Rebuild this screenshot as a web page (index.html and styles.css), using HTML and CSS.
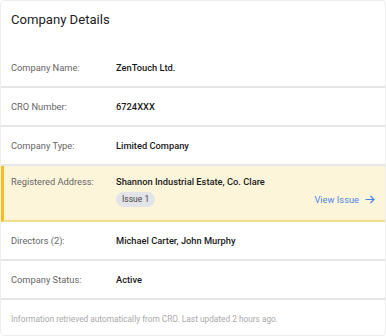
FILE: index.html
```html
<html>
<head>
<meta charset="UTF-8">
<link rel="stylesheet" href="styles.css">
</head>
<body>
<div class="tarjeta">
	<div class="cabecera">Company Details</div>
	<div class="fila">
		<div class="etiqueta">Company Name:</div>
		<div class="valor">ZenTouch Ltd.</div>
	</div>
	<div class="fila">
		<div class="etiqueta">CRO Number:</div>
		<div class="valor">6724XXX</div>
	</div>
	<div class="fila">
		<div class="etiqueta">Company Type:</div>
		<div class="valor">Limited Company</div>
	</div>
	<div class="fila fila_aviso">
		<div class="etiqueta">Registered Address:</div>
		<div class="valor_doble">
			<div class="valor">Shannon Industrial Estate, Co. Clare</div>
			<div class="linea_aviso">
				<span class="insignia">Issue 1</span>
				<a class="enlace" href="#">View Issue
					<svg width="10" height="9" viewBox="0 0 10 9"><path d="M0.5 4.5H9M5.5 1L9 4.5L5.5 8" fill="none" stroke="#4d86e6" stroke-width="1.2"/></svg>
				</a>
			</div>
		</div>
	</div>
	<div class="fila">
		<div class="etiqueta">Directors (2):</div>
		<div class="valor">Michael Carter, John Murphy</div>
	</div>
	<div class="fila">
		<div class="etiqueta">Company Status:</div>
		<div class="valor">Active</div>
	</div>
	<div class="pie">Information retrieved automatically from CRO. Last updated 2 hours ago.</div>
</div>
</body>
</html>
```

FILE: styles.css
```css
body{
	margin: 0;
	font-family: Roboto, sans-serif;
}
.tarjeta{
	width: 384px;
	height: 334px;
	border: 1px solid #eeeeee;
	border-radius: 4px;
	background-color: #ffffff;
	overflow: hidden;
}
.cabecera{
	padding: 10px 10px 0 10px;
	height: 38px;
	font-size: 13.1px;
	line-height: 18px;
	color: #222222;
}
.fila{
	display: grid;
	grid-template-columns: 105px 1fr;
	padding: 0 10px;
	height: 37px;
	line-height: 37px;
	border-bottom: 2px solid #e6e6e6;
	font-size: 9.3px;
}
.etiqueta{
	color: #666666;
}
.valor{
	color: #1a1a1a;
	font-weight: 500;
}
.fila_aviso{
	height: auto;
	line-height: 14px;
	padding: 9px 10px 13px 7px;
	border-left: 3px solid #f4c020;
	border-bottom: 2px solid #f6dc8a;
	background-color: #fdf5da;
}
.valor_doble{
	display: flex;
	flex-direction: column;
	gap: 3px;
}
.linea_aviso{
	display: flex;
	justify-content: space-between;
	align-items: center;
	height: 15px;
}
.insignia{
	background-color: #e2e4e8;
	color: #444444;
	border-radius: 8px;
	padding: 0 6px;
	font-size: 8.5px;
	line-height: 15px;
}
.enlace{
	display: flex;
	align-items: center;
	gap: 6px;
	color: #4d86e6;
	text-decoration: none;
	font-size: 9.3px;
}
.pie{
	padding: 13px 10px 0 10px;
	font-size: 8.3px;
	line-height: 12px;
	color: #aaaaaa;
}
```
